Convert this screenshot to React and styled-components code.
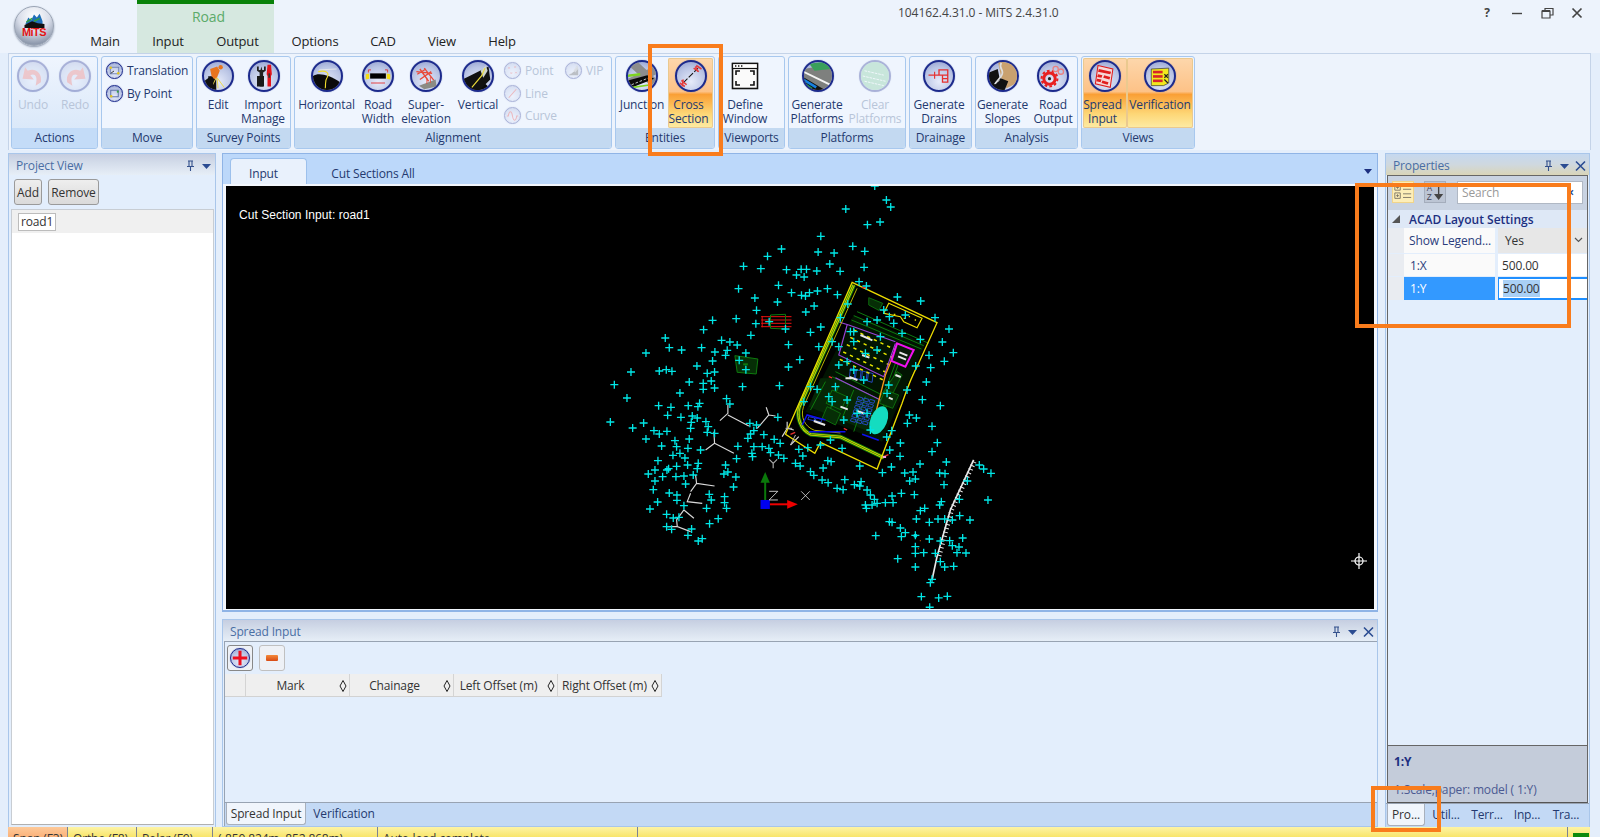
import React from 'react';
import styled, { createGlobalStyle } from 'styled-components';

const Global = createGlobalStyle`
  html, body { margin: 0; padding: 0; background: #e4eefb; overflow: hidden; }
  body { font-family: "Open Sans", "Noto Sans", "Liberation Sans", sans-serif; font-size: 12px; letter-spacing: -0.15px; color: #1f3468; }
  * { box-sizing: border-box; }
`;

const Page = styled.div`position: relative; width: 1600px; height: 837px; overflow: hidden; display: flex; flex-direction: column; background: #e4eefb;`;

/* ---------- title bar ---------- */
const TitleBar = styled.header`height: 53px; flex: none; display: flex; background: #edf3fc; padding-left: 14px;`;
const Logo = styled.div`width: 40px; height: 40px; margin-top: 6px; flex: none; border-radius: 50%; border: 1px solid #9aa4b4; background: radial-gradient(circle at 50% 25%, #ffffff 0%, #d9deea 45%, #8d98ac 80%, #c7cdd9 100%); box-shadow: 0 1px 2px #8893a8; overflow: hidden;
  svg { display: block; width: 100%; height: 100%; }`;
const Menu = styled.nav`display: flex; align-items: flex-end; margin-left: 26px; flex: none; height: 53px;`;
const MenuTab = styled.div`width: ${p => p.$w}px; height: 25px; font-size: 13px; color: #222; text-align: center; line-height: 26px; padding-left: ${p => p.$pl || 0}px; padding-right: ${p => p.$pr || 0}px;`;
const Context = styled.div`display: flex; flex-direction: column; height: 53px; background: #d6e8e0; border-top: 4px solid #098209;`;
const ContextLabel = styled.div`height: 24px; flex: none; text-align: center; font-size: 14px; color: #5cab6a; line-height: 26px; padding-left: 6px;`;
const ContextTabs = styled.div`display: flex;`;
const WindowTitle = styled.div`margin-left: 366px; margin-top: 4px; font-size: 12px; letter-spacing: -0.05px; color: #444; white-space: nowrap; width: 200px; flex: none;`;
const WinControls = styled.div`margin-left: auto; display: flex; align-items: flex-start; padding: 7px 15px 0 0; gap: 14px;
  svg { display: block; width: 16px; height: 12px; }`;
const HelpMark = styled.span`width: 16px; text-align: center; font-weight: 700; font-size: 12px; color: #444; line-height: 12px;`;

/* ---------- ribbon ---------- */
const Ribbon = styled.div`height: 97px; flex: none; margin-left: 8px; width: 1583px; border: 1px solid #c4d3e8; border-bottom: 0; background: #edf3fc; padding: 2px 0 0 2px; display: flex; gap: 3px;`;
const Group = styled.section`width: ${p => p.$w}px; height: 93px; flex: none; display: flex; flex-direction: column; border: 1px solid #a8c8ee; border-radius: 3px; overflow: hidden; background: ${p => p.$tinted ? 'linear-gradient(#eff5fe, #d5e5f8)' : '#eff5fe'};`;
const GroupBody = styled.div`height: 71px; display: flex; flex: none; padding-top: 1px; padding-left: ${p => p.$pl || 0}px;`;
const GroupLabel = styled.div`flex: 1; background: ${p => p.$tinted ? '#c4dcf8' : '#c3d9f1'}; text-align: center; line-height: 19px; color: #24396f;`;
const RibbonBtn = styled.div`width: ${p => p.$w}px; height: 70px; flex: none; display: flex; flex-direction: column; align-items: center; padding-top: 2px; border-radius: 2px;
  ${p => p.$active && 'background: linear-gradient(#fdd7ac 0%, #fdc287 48%, #fa9f35 52%, #fdd777 80%, #fdeca5 100%); box-shadow: inset 0 0 0 1px #eac98f;'}`;
const BtnLabel = styled.div`margin-top: 6px; margin-right: ${p => p.$nudge || 0}px; line-height: 14px; text-align: center; white-space: pre; color: ${p => p.$off ? '#b8c5d9' : '#24396f'};`;
const Badge = styled.div`width: ${p => p.$s}px; height: ${p => p.$s}px; flex: none; border-radius: 50%; overflow: hidden; border: ${p => p.$s > 20 ? 2 : 1.5}px solid #1c2a8c; background: radial-gradient(circle at 50% 70%, #e6ebfa 0%, #b9c4e4 60%, #8a97cb 100%); box-shadow: 0 0 1px #5566aa;
  ${p => p.$off && 'opacity: 0.33;'}
  svg { display: block; width: 100%; height: 100%; }`;
const PlainIcon = styled.div`width: 32px; height: 32px; flex: none; svg { display: block; width: 100%; height: 100%; }`;
const SmallCol = styled.div`width: ${p => p.$w}px; flex: none; display: flex; flex-direction: column; padding-top: 4px; margin-left: ${p => p.$ml || 0}px; gap: 5.5px;`;
const SmallBtn = styled.div`display: flex; align-items: center; gap: 4px; height: 17px; white-space: nowrap; color: ${p => p.$off ? '#b8c5d9' : '#24396f'};`;

/* ---------- main ---------- */
const Main = styled.main`flex: none; height: 674px; margin-top: 3px; padding-left: 8px; display: flex;`;
const DockPanel = styled.aside`width: ${p => p.$w}px; flex: none; display: flex; flex-direction: column; background: #e3eefc; border: 1px solid #a9c6ea; border-bottom: 0;`;
const DockHead = styled.div`height: 21px; flex: none; display: flex; align-items: center; padding: 2px 2px 0 7px; color: ${p => p.$c || '#4a6ea4'}; background: ${p => p.$tan ? 'linear-gradient(#c5d8ef, #cfd8df 50%, #d9d5b8)' : 'linear-gradient(#c6cee1, #d3dcea 40%, #e6eef7)'};
  span { flex: 1; }
  svg { display: block; width: 13px; height: 12px; margin-left: 3px; }`;
const LeftBar = styled.div`display: flex; gap: 6px; padding: 4px 0 0 5px; height: 34px; flex: none;`;
const Button = styled.button`font: inherit; letter-spacing: inherit; color: #333; width: ${p => p.$w}px; height: 26px; padding: 0; border: 1px solid #9a9a9a; border-radius: 3px; background: linear-gradient(#eeeeee, #dadada);`;
const ProjectList = styled.div`flex: 1; margin: 0 1px 2px 2px; background: #fff; border: 1px solid #c8cdd3; border-bottom-color: #b0b0b0;`;
const ProjectRow = styled.div`height: 23px; background: #f0f0f0; padding: 3px 6px 2px;`;
const RowInput = styled.div`width: 38px; height: 18px; background: #fff; border: 1px solid #bcbcbc; line-height: 16px; padding-left: 2px; color: #333;`;

const Center = styled.div`width: 1156px; flex: none; margin: 0 7px 0 6px; display: flex; flex-direction: column; gap: 7px;`;
const DocPanel = styled.div`height: 459px; flex: none; display: flex; flex-direction: column; background: #f3f7fd; border: 1px solid #8fb4e6; border-width: 1px 1px 2px 1px;`;
const DocTabs = styled.div`height: 30px; flex: none; display: flex; align-items: flex-end; background: #bcd8fa; padding-left: 7px;`;
const DocTab = styled.div`height: 26px; width: ${p => p.$w}px; line-height: 31px; text-align: center; color: #24396f; border-radius: 4px 4px 0 0; padding-right: ${p => p.$pr || 0}px;
  ${p => p.$active && 'background: #e9f1fc; border: 1px solid #9cc0ec; border-bottom: 0; line-height: 30px;'}`;
const DocMenu = styled.div`margin-left: auto; margin-right: 5px; margin-bottom: 10px; width: 0; height: 0; border: 4px solid transparent; border-top: 5px solid #1c2f80; border-bottom: 0;`;
const Canvas = styled.div`position: relative; flex: 1; margin: 2px 3px 1px 3px; background: #000; overflow: hidden;
  svg { position: absolute; inset: 0; width: 100%; height: 100%; display: block; }`;
const CanvasTitle = styled.div`position: absolute; left: 13px; top: 22px; color: #fff; font-size: 12px; font-family: "Liberation Sans", sans-serif; letter-spacing: 0.05px;`;
const CrossCursor = styled.div`position: absolute; left: 1125px; top: 367px; width: 16px; height: 16px; border-radius: 50%;
  svg { width: 16px; height: 16px; }`;

const SpreadPanel = styled.div`flex: 1; display: flex; flex-direction: column; background: #e3eefc; border: 1px solid #a9c6ea;`;
const SpreadBody = styled.div`flex: 1; display: flex; flex-direction: column; margin-left: 1px; border-top: 1px solid #98a3b2; border-left: 1px solid #98a3b2;`;
const SpreadTools = styled.div`display: flex; gap: 6px; padding: 3px 0 0 2px; height: 31px; flex: none;`;
const ToolBtn = styled.div`width: 26px; height: 26px; border: 1px solid ${p => p.$strong ? '#888' : '#c0c0c0'}; border-radius: 3px; background: #eef1f6; display: flex; align-items: center; justify-content: center;`;
const MinusBar = styled.div`width: 12px; height: 6px; background: linear-gradient(#f48a3a, #d84a14); border-radius: 1px;`;
const TableHead = styled.div`display: flex; height: 23px; flex: none; margin-top: 1px; width: 437px; background: #efefef; border-bottom: 1px solid #d2d2d2;`;
const HeadCell = styled.div`width: ${p => p.$w}px; flex: none; display: flex; align-items: center; justify-content: center; position: relative; border-right: 1px solid #d4d4d4; color: #333; padding-right: ${p => p.$pr ?? 14}px; white-space: nowrap;`;
const SortMark = styled.svg`position: absolute; right: 2px; top: 5px; width: 8px; height: 14px;`;
const Fill = styled.div`flex: 1;`;
const BottomTabs = styled.div`height: 24px; flex: none; display: flex; background: #c3d9f5; border-top: 1px solid #98a3b2; padding-left: 1px;`;
const BottomTab = styled.div`width: ${p => p.$w}px; height: 22px; line-height: 22px; text-align: center; color: #24396f; white-space: nowrap; flex: none;
  ${p => p.$active && 'background: #f0f5fc; border: 1px solid #a8b0bc; border-top: 0; border-radius: 0 0 3px 3px; color: #333; line-height: 21px;'}`;

const PropsBox = styled.div`flex: 1; margin: 0 1px; display: flex; flex-direction: column; border: 1px solid #666; border-bottom: 1px solid #555; min-height: 0;`;
const PropsTools = styled.div`height: 34px; flex: none; background: #c9d3e2; display: flex; align-items: flex-start; padding: 5px 4px 0 4px;`;
const ToolIcon = styled.div`width: 22px; height: 22px; margin-right: ${p => p.$mr}px; flex: none; background: ${p => p.$on ? '#fdeeb8' : '#bcc5d4'}; border: 1px solid ${p => p.$on ? '#f0d48a' : '#a4adbc'};
  svg { display: block; width: 100%; height: 100%; }`;
const SearchBox = styled.div`width: 127px; height: 23px; background: #fff; border: 1px solid #b0b8c4; color: #999; line-height: 21px; padding-left: 4px; display: flex;
  span { flex: 1; } b { color: #2b4c92; font-weight: 700; padding-right: 8px; }`;
const Cat = styled.div`height: 18px; flex: none; background: #dee8f6; display: flex; align-items: center; font-weight: 600; color: #1c2f80; letter-spacing: 0;`;
const CatArrow = styled.div`width: 0; height: 0; margin: 0 9px 0 4px; border-style: solid; border-width: 0 0 8px 8px; border-color: transparent transparent #555 transparent;`;
const GridRow = styled.div`height: ${p => p.$h}px; flex: none; display: flex; margin-top: ${p => p.$mt || 0}px;`;
const Gutter = styled.div`width: 16px; flex: none; background: #e9ecf1;`;
const NameCell = styled.div`width: 91px; flex: none; margin-right: 3px; padding-left: ${p => p.$pad || 6}px; display: flex; align-items: center; white-space: nowrap; overflow: hidden; background: ${p => p.$sel ? '#3399ff' : '#fafafa'}; color: ${p => p.$sel ? '#fff' : '#2b3d7c'};`;
const ValueCell = styled.div`flex: 1; display: flex; align-items: center; padding-left: ${p => p.$pad || 4}px; color: #333; position: relative; white-space: nowrap;
  background: ${p => p.$combo ? '#e7e7e7' : '#fff'};
  ${p => p.$sel && 'border-top: 2px solid #1f8fff; border-bottom: 2px solid #1f8fff; border-left: 1px solid #1f8fff;'}
  mark { background: #a9d0f5; color: #333; }`;
const Chevron = styled.svg`position: absolute; right: 4px; top: 9px; width: 9px; height: 6px;`;
const DescBox = styled.div`height: 57px; flex: none; margin-top: 3px; background: #c4ccda; border-top: 1px solid #666; padding: 7px 6px; color: #4b5a92;`;
const DescTitle = styled.div`font-weight: 700; color: #1c2f80; height: 21px; margin-bottom: 7px;`;

/* ---------- status ---------- */
const StatusBar = styled.footer`position: relative; flex: none; height: 10px; margin-left: 8px; width: 1582px; overflow: hidden; display: flex; background: linear-gradient(#fdf4a6, #f8e56a);`;
const StatusCell = styled.div`width: ${p => p.$w}px; flex: none; padding: 3px 0 0 5px; border-right: 1px solid #7d8391; white-space: nowrap; color: #333; ${p => p.$on && 'background: linear-gradient(#fdc999, #fbb27a);'}`;
const StatusEnd = styled.div`margin-left: auto; width: 23px; padding: 0 0 0 5px; border-left: 1px solid #7d8391; display: flex; align-items: flex-end;`;
const StatusLight = styled.div`width: 16px; height: 4px; background: #0d8a0d;`;

/* ---------- annotation frames ---------- */
const Frame = styled.div`position: absolute; left: ${p => p.$x}px; top: ${p => p.$y}px; width: ${p => p.$w}px; height: ${p => p.$h}px; border: 4px solid #f97c1c; pointer-events: none;`;

/* ---------- icon art ---------- */
const I = ({ children }) => <svg viewBox="0 0 32 32">{children}</svg>;
const art = {
  undo: <I><path d="M25 23C27 12 18 6 10 10L7 6 4 19 17 20 13 15C18 13 22 16 19 27Z" fill="#f0706a" /></I>,
  redo: <I><path d="M7 23C5 12 14 6 22 10L25 6 28 19 15 20 19 15C14 13 10 16 13 27Z" fill="#f0706a" /></I>,
  trans: <I><rect x="7" y="9" width="18" height="14" fill="none" stroke="#6d7fb0" strokeWidth="2" /><circle cx="8" cy="10" r="2.6" fill="#e2c520" /><circle cx="24" cy="22" r="2.6" fill="#e2c520" /><path d="M8 22l7-5" stroke="#333" strokeWidth="2" /></I>,
  bypoint: <I><rect x="8" y="9" width="16" height="14" fill="none" stroke="#5a6da5" strokeWidth="2" /><circle cx="9" cy="22" r="2.6" fill="#e2c520" /><circle cx="23" cy="12" r="2.2" fill="#3aa34a" /></I>,
  edit: <I><path d="M0 32L0 22 8 16 14 20 14 32Z" fill="#111" /><path d="M7 8l8-3 3 5-4 10-5-2Z" fill="#e8741e" /><circle cx="19" cy="6" r="2.5" fill="#e8741e" /><path d="M14 18L8 30M15 18l1 12M15 18l8 11" stroke="#ecd84a" strokeWidth="1.1" fill="none" /><path d="M5 16l5 1 1 13-7-1Z" fill="#111" /></I>,
  tools: <I><path d="M8 5v5l3 2v16h4V12l3-2V5l-2 0v4h-2l-1-4-1 4H10V5Z" fill="#222" /><rect x="8" y="16" width="8" height="12" fill="#191919" /><path d="M20 3h4l1 11-1 2v12h-4V16l-1-2Z" fill="#e3141c" /><rect x="21" y="13" width="2" height="5" fill="#333" /></I>,
  horizontal: <I><path d="M0 32V16C6 12 18 14 32 24V32Z" fill="#0a0a0a" /><path d="M7 9l20-1" stroke="#e8e8e8" strokeWidth="1" /><path d="M6 11C16 9 19 13 16 18 13 22 15 25 14 30" fill="none" stroke="#f0dc2c" strokeWidth="1.3" /></I>,
  roadwidth: <I><rect x="7" y="13" width="18" height="6" fill="#000" /><path d="M2 14l4-1v6l-4 1ZM30 14l-4-1v6l4 1Z" fill="#f4dc14" /><path d="M5 9h3M27 9h-3M5 9v3M27 9v3M8 24h16" stroke="#e42c2c" strokeWidth="1" fill="none" /></I>,
  super: <I><path d="M6 14l10-6M9 20L22 11M9 8l10 14M14 7l11 14M5 11l18 2" stroke="#e9493a" strokeWidth="1.5" fill="none" /><path d="M8 27l19-7 1 8-14 3Z" fill="#8b8b84" /><path d="M17 18v7M21 17v7" stroke="#e9493a" strokeWidth="1" /></I>,
  vertical: <I><path d="M0 19H18L32 32H0Z" fill="#0a0a0a" /><path d="M0 19L20 9 28 5 30 20 18 32H0Z" fill="#111" /><path d="M19 10l6-6 2 6-5 8Z" fill="#cfd4ce" /><path d="M9 29L20 16 24 7" stroke="#e8d83a" strokeWidth="1.4" fill="none" /></I>,
  point: <I><path d="M7 9l3 3m0-3l-3 3M20 7l3 3m0-3l-3 3M12 20l3 3m0-3l-3 3M22 19l3 3m0-3l-3 3" stroke="#e53c3c" strokeWidth="1.5" /></I>,
  line: <I><path d="M8 25L24 7" stroke="#e53c3c" strokeWidth="2.2" /></I>,
  curve: <I><path d="M4 17h3c2-12 7-12 9 0s7 12 9 0h3" fill="none" stroke="#e53c3c" strokeWidth="2.2" /></I>,
  vip: <I><path d="M5 26L26 12V26Z" fill="#555" /><path d="M16 16l8-11 2 7-6 8Z" fill="#aaa" /><path d="M10 24l13-15" stroke="#ddd" strokeWidth="1" /></I>,
  junction: <I><path d="M-2 20L32 4V14L0 32Z" fill="#8d8d8d" /><path d="M6 2L30 24" stroke="#8d8d8d" strokeWidth="10" /><path d="M0 21L22 15 30 19 2 30Z" fill="#0a0a0a" /><path d="M-2 16L14 14" stroke="#7ed321" strokeWidth="3" /><path d="M4 26l20-8" stroke="#ddd" strokeWidth="1" strokeDasharray="3 2" /><path d="M0 30L26 26" stroke="#7ed321" strokeWidth="2" /></I>,
  cross: <I><path d="M7 24L24 7" stroke="#111" strokeWidth="1.2" strokeDasharray="7 2" /><path d="M19 7l6 4M22 4l6 4M21 5l3 6" stroke="#e53c3c" strokeWidth="1.8" /><path d="M5 21l6 5M3 24l6 4M7 20l-1 8" stroke="#e53c3c" strokeWidth="1.8" /></I>,
  window: <svg viewBox="0 0 32 32"><rect x="3.5" y="3.5" width="25" height="25" fill="#fafafa" stroke="#111" strokeWidth="1.6" /><rect x="3.5" y="3.5" width="25" height="5" fill="#fff" stroke="#111" strokeWidth="1.2" /><path d="M6 6h1.4M9 6h1.4M12 6h1.4" stroke="#111" strokeWidth="1.5" /><path d="M7 15v-4h4M25 15v-4h-4M7 21v4h4M25 21v4h-4" fill="none" stroke="#111" strokeWidth="1.6" /></svg>,
  platforms: <I><path d="M0 8L32 2V32H0Z" fill="#7e807e" /><path d="M6 2L28 -1 30 8 12 10Z" fill="#3aa05a" /><path d="M-1 11L32 27" stroke="#f4f4f4" strokeWidth="2.2" /><path d="M-1 17L24 32H0Z" fill="#111" /><path d="M-1 20L14 29" stroke="#1680e0" strokeWidth="3" /><path d="M-1 24L9 31" stroke="#1aa060" strokeWidth="3" /></I>,
  clearp: <I><path d="M0 0H32V32H0Z" fill="#79c896" /><path d="M4 10l22 5M2 16l26 6M4 22l22 5" stroke="#fff" strokeWidth="1" strokeDasharray="3 1" /></I>,
  drains: <I><path d="M4 15H26M16 15v-6h10v14h-6v-8" fill="none" stroke="#e53030" strokeWidth="1.5" /><path d="M11 11v8M20 19h6" stroke="#e53030" strokeWidth="1.3" /></I>,
  slopes: <I><path d="M10 -2L32 4V24L20 30 14 18Z" fill="#c9a16f" /><path d="M0 12L10 8 12 18 22 22 18 32H0Z" fill="#111" /><path d="M14 1C10 8 19 9 14 16 11 20 9 22 7 25" fill="none" stroke="#ddd" strokeWidth="2" /><path d="M6 25l6-4" stroke="#ddd" strokeWidth="1" /></I>,
  output: <I><circle cx="12" cy="19" r="6.5" fill="none" stroke="#e82020" strokeWidth="3.4" /><circle cx="12" cy="19" r="9" fill="none" stroke="#e82020" strokeWidth="2.4" strokeDasharray="3 2.6" /><circle cx="12" cy="19" r="1.8" fill="#222" /><circle cx="19" cy="8" r="3" fill="none" stroke="#e98080" strokeWidth="1.5" /><circle cx="25" cy="11" r="3" fill="none" stroke="#e98080" strokeWidth="1.5" /></I>,
  spread: <I><path d="M8 4l17 4-3 21-17-4Z" fill="#f5d8d8" stroke="#e01e1e" strokeWidth="1.2" /><path d="M9 8l14 3-1 3-14-3ZM8 14l5 1-1 3-5-1ZM15 15l7 2-1 3-7-2ZM7 19l5 1-1 3-5-1ZM13 21l7 2-1 3-7-2Z" fill="#e01e1e" /></I>,
  verify: <I><path d="M6 8l20-1v17l-6 3H6Z" fill="#f2e81e" stroke="#333" strokeWidth="0.8" /><rect x="8" y="10" width="11" height="3" fill="#d8242a" /><rect x="8" y="15" width="11" height="3" fill="#d8242a" /><rect x="8" y="20" width="11" height="3" fill="#d8242a" /><path d="M21 14l4 4m0-4l-4 4M21 20l4 4" stroke="#222" strokeWidth="1.3" /></I>,
};

const Ico = ({ name, off, s = 32 }) => <Badge $s={s} $off={off}>{art[name]}</Badge>;
const Big = ({ w, icon, text, off, active, nudge }) => (
  <RibbonBtn $w={w} $active={active}>
    <Ico name={icon} off={off} />
    <BtnLabel $off={off} $nudge={nudge}>{text}</BtnLabel>
  </RibbonBtn>
);
const Small = ({ icon, text, off }) => (
  <SmallBtn $off={off}><Ico name={icon} off={off} s={17} />{text}</SmallBtn>
);

/* ---------- drawing data ---------- */
const crosses = [853,18,888,60,901,81,766,87,869,126,831,134,691,169,787,199,823,214,573,207,683,216,731,219,531,229,718,252,459,259,511,266,588,269,632,268,648,268,679,273,749,274,821,262,618,285,641,291,806,305,564,316,444,326,828,318,603,338,633,346,645,348,657,338,681,333,711,326,741,344,493,354,561,366,671,378,772,372,498,391,646,396,921,351,991,363,437,416,366,421,496,431,536,425,585,447,691,441,339,449,660,457,481,466,224,474,393,481,418,486,440,495,594,494,236,503,273,510,333,503,166,519,373,516,410,511,405,526,466,519,446,541,628,539,366,543,319,558,594,561,466,569,121,576,206,573,227,569,244,574,350,580,372,576,296,606,362,603,338,610,338,628,372,624,71,614,456,620,567,617,268,639,109,654,408,656,418,672,204,677,241,682,293,677,327,670,322,680,231,706,271,712,305,708,320,714,302,727,300,745,346,725,59,726,159,729,126,744,190,752,206,762,229,754,353,740,350,757,372,760,166,777,253,782,296,777,213,798,258,800,292,805,330,810,442,799,478,730,498,735,490,752,480,762,472,775,520,764,551,778,569,790,562,712,490,800,515,800,535,805,540,818,484,820,486,830,438,836,564,825,580,835,637,828,625,808,652,803,247,826,268,820,283,834,202,842,258,859,291,855,323,850,320,866,193,870,173,882,234,866,229,870,405,855,412,876,400,882,436,891,256,890,280,888,216,890,193,903,308,885,285,912,429,921,188,929,236,939,259,945,259,961,356,943,362,960,402,950,402,968,408,985,201,966,178,987,280,977,348,985,228,1003,248,1014,265,1012,383,1016,357,1031,228,1040,243,1048,303,1047,292,1066,335,1076,323,1083,615,850,629,858,660,875,670,886,698,864,712,842,722,845,808,858,695,900,713,908,763,899,740,925,758,929,792,914,812,905,808,918,830,930,840,945,852,958,845,975,825,975,828,985,860,970,885,968,905,948,908,968,933,940,972,944,876,878,903,861,943,879,968,876,958,903,975,897,989,852,1068,846,1048,879,1064,881,1061,914,1131,903,1167,855,1180,867,1202,880,1193,960,1107,958,1053,965,1048,975,990,992,1003,985,978,1017,1017,1027,1043,1017,1063,1017,1086,1020,1108,1007,1139,1020,897,1025,905,1027,930,1044,945,1058,933,1070,856,1067,975,1066,1017,1077,1050,1083,1078,1082,1086,1097,1117,1074,1106,1101,1100,1118,1127,1119,975,1100,975,1120,1000,1118,1035,1120,922,1136,975,1161,1050,1145,1063,1161,1090,1159,1025,1198,1020,1208,993,1250,1045,1254,1071,1249,1018,1282,1034,413,1076,447,1056,486,1089,518,1062,544,1016,526,1021,563,1008,606,996,659,1050,677,957,705,978,714,951,730,1025,739,1041,788,1025,815,930,789,929,829,904,752,889,771,898,810,976,558,950,630,880,390,897,410,910,430,945,405,935,460,990,478,860,420,830,425,790,455,780,455,750,413,725,485,685,500,745,500,790,485,825,520,870,470,860,510,745,555,770,545,895,615,820,600,790,570,735,620,680,628,660,620,640,665,715,650,770,660,725,665,760,720,830,700,890,640,720,780,755,805,690,795,800,700,840,750];
let crossPath = '';
for (let i = 0; i < crosses.length; i += 2) {
  const x = crosses[i], y = crosses[i + 1];
  crossPath += `M${x - 12} ${y}h24M${x} ${y - 12}v24`;
}

/* rows of parking dashes and building blocks run along the site's long axis */
const dashRows = [];
for (let r = 0; r < 5; r++) {
  for (let c = 0; c < 7; c++) {
    const x = 205 - 10.5 * r + 20 * c;
    const y = 165 + 22 * r + 9.5 * c;
    dashRows.push(`M${x} ${y}l9 4.300`);
  }
}
const blockAt = (x0, y0, rows, cols, w, h) => {
  const out = [];
  for (let r = 0; r < rows; r++) {
    for (let c = 0; c < cols; c++) {
      const x = x0 - 4 * r + (w + 4) * c;
      const y = y0 + (h + 5) * r + 4 * c;
      out.push(`M${x} ${y}l${w} 4l-3 ${h}l-${w} -4Z`);
    }
  }
  return out.join('');
};
const blueBlocks = blockAt(218, 365, 6, 3, 14, 8) + blockAt(195, 280, 1, 4, 14, 26) + blockAt(70, 425, 1, 2, 18, 8);

const Drawing = () => (
  <svg viewBox="225 186 1149 423" preserveAspectRatio="none">
    <g transform="translate(590 180) scale(0.3333)">
      <g fill="none" stroke="#d8d8d8" strokeWidth="3.5">
        <path d="M412 675V700L388 722M412 705L475 738M527 682L535 705 500 745M535 705L555 708" />
        <path d="M370 755L372 790 345 810M372 790L430 820" />
        <path d="M315 885L318 910 300 935M318 910L372 918M300 940L290 965 335 970M280 990L310 1015M280 990L258 1020 260 1040 300 1055M230 1040L260 1040" />
        <path d="M575 770L590 745 610 750M590 725L590 745M600 795L625 770" />
        <path d="M548 865V850L536 838M548 850L560 838" stroke="#aaa" />
      </g>
      <path d="M512 410H603M512 420H603M512 430H603M512 440H603M515 408V442" stroke="#e81010" strokeWidth="3" fill="none" />
      <path d="M540 405L585 403 585 447 540 445Z" fill="none" stroke="#0e7a0e" strokeWidth="3" />
      <path d="M433 527L502 537 497 582 440 577Z" fill="#062e06" stroke="#0e7a0e" strokeWidth="3" />
      <rect x="458" y="550" width="14" height="6" fill="#0e7a0e" />
      <path d="M1150 840L1080 990 1040 1130 1025 1200" fill="none" stroke="#e8e8e8" strokeWidth="5" />
      <path d="M1152 845L1084 990 1046 1130" fill="none" stroke="#e8e8e8" strokeWidth="14" strokeDasharray="3 9" />
      <circle cx="975" cy="1067" r="6" fill="#00e0e0" />
      <circle cx="990" cy="1082" r="2" fill="#b05010" /><circle cx="984" cy="1106" r="2" fill="#b05010" />
    </g>
    {/* site plan */}
    <g transform="translate(785 275) scale(0.3333)">
      <path d="M250 68L292 85 280 106 250 90Z" fill="#062e06" stroke="#0e7a0e" strokeWidth="2.5" />
      <path d="M205 120L420 205 290 500 60 410Z" fill="#021402" />
      <path d="M150 310L285 375 250 470 70 395 105 310Z" fill="#062706" />
      <path d="M215 110L430 205M205 122L415 212M198 135L408 222M150 290L290 360M140 305L280 372M120 320L75 405M300 345L330 265M240 365L205 470M160 330L130 415M205 345L170 430M345 250L270 460" fill="none" stroke="#0e7a0e" strokeWidth="3" />
      <path d="M280 370L335 290 350 300 300 400Z" fill="#062e06" stroke="#0e7a0e" strokeWidth="2.5" />
      <path d="M125 395l40 20-15 35-40-20ZM140 345l45 20-18 40-45-20ZM300 345l40 15-18 40-40-15Z" fill="#062e06" stroke="#0e7a0e" strokeWidth="2.5" />
      <path d={blueBlocks} fill="none" stroke="#2a50e0" strokeWidth="2.5" />
      <path d={dashRows.join('')} stroke="#e8e800" strokeWidth="4.500" fill="none" />
      <path d="M150 138L190 150 330 200M185 150L160 240 295 305 330 205M150 308L285 375" fill="none" stroke="#9a44d8" strokeWidth="3.400" />
      <path d="M205 30L42 395C32 425 45 465 75 478L165 486 295 548" fill="none" stroke="#0e7a0e" strokeWidth="13" />
      <path d="M205 30L42 395C32 425 45 465 75 478L165 486 295 548" fill="none" stroke="#e0e000" strokeWidth="7" />
      <path d="M205 30L42 395C32 425 45 465 75 478L165 486 295 548" fill="none" stroke="#0a5a0a" strokeWidth="2" />
      <path d="M215 40L54 395C44 425 57 455 87 466L165 474" fill="none" stroke="#d8d800" strokeWidth="2.500" />
      <path d="M200 22L455 143 400 265Q375 310 350 385L275 582 105 502 88 535 0 478Z" fill="none" stroke="#ecdc00" strokeWidth="4" />
      <path d="M310 85L410 130 395 158 355 140 345 125 295 115Z" fill="none" stroke="#ecdc00" strokeWidth="3.500" />
      <path d="M325 118h5M355 130h5M370 125h4M388 135h4" stroke="#e6e000" strokeWidth="4" />
      <path d="M120 435L65 420 50 450M70 470H180M230 478L280 496" fill="none" stroke="#0e10f0" strokeWidth="4.500" />
      <path d="M85 438l34 12M180 310h18M225 180l36 16M230 240l22 8M192 306l24 9M165 395l22 8M215 408l22 8M310 368l12 5M340 235l20 8M330 300l16 6" stroke="#e8e8e8" strokeWidth="6" />
      <path d="M328 230L300 300 268 425 258 422M268 425L292 432" fill="none" stroke="#f59a18" strokeWidth="4" />
      <ellipse cx="280" cy="436" rx="25" ry="44" transform="rotate(22 280 436)" fill="#14dcc0" />
      <path d="M335 205L385 225 360 275 318 258Z" fill="#0a1a0a" stroke="#f010f0" strokeWidth="6" />
      <path d="M342 232l24 10M338 244l24 10" stroke="#e8e8e8" strokeWidth="6" />
      <path d="M230 38h14M295 545l14 -6M15 478l14 -6M130 305l10 4M175 460l10 5" stroke="#e83030" strokeWidth="4" />
      <path d="M292 546h10" stroke="#f0a0e0" strokeWidth="6" />
      <path d="M0 460h20M15 510L30 480" stroke="#bbb" strokeWidth="3" />
    </g>
    <g transform="translate(590 180) scale(0.3333)">
      <path d={crossPath} stroke="#00e6e6" strokeWidth="4" fill="none" />
      <path d="M524 962V905" stroke="#0a780a" strokeWidth="6" />
      <path d="M510 908L524 876 538 908Z" fill="#0a780a" />
      <path d="M538 973H595" stroke="#ee0000" strokeWidth="6" />
      <path d="M590 960L622 973 590 986Z" fill="#ee0000" />
      <rect x="510" y="960" width="28" height="27" fill="#0000f0" />
      <path d="M536 934H562L536 960H562" fill="none" stroke="#e8e8e8" strokeWidth="2.5" />
      <path d="M632 934L658 960M658 934L632 960" stroke="#d8d8d8" strokeWidth="2.5" />
    </g>
  </svg>
);

const PinIcon = () => <svg viewBox="0 0 13 12"><path d="M4 1h5M5 1v5M8 1v5M3 6.5h7M6.5 7v4" stroke="#33508c" strokeWidth="1.1" fill="none" /></svg>;
const DropIcon = () => <svg viewBox="0 0 13 12"><path d="M2 4h9L6.5 9Z" fill="#2b4c92" /></svg>;
const CloseIcon = () => <svg viewBox="0 0 13 12"><path d="M2 1.5l9 9M11 1.5l-9 9" stroke="#2b4c92" strokeWidth="1.6" /></svg>;
const Sort = () => <SortMark viewBox="0 0 8 14"><path d="M4 1.5L7 7 4 12.5 1 7Z" fill="none" stroke="#222" strokeWidth="1" /></SortMark>;

export default function App() {
  return (
    <Page>
      <Global />
      <TitleBar>
        <Logo>
          <svg viewBox="0 0 40 40">
            <path d="M11 18l3-7 3 3 3-6 3 3 3-4 3 8 0 3H11Z" fill="#1f6fb8" />
            <path d="M10 19l8-4 6 2 7 1v4H10Z" fill="#111" />
            <path d="M12 16l6-4M20 15l6-3" stroke="#35a040" strokeWidth="1.5" />
            <text x="20" y="31" textAnchor="middle" fontSize="11.500" fontWeight="700" fill="#e31414" fontFamily="Liberation Sans, sans-serif" letterSpacing="-0.6">MiTS</text>
          </svg>
        </Logo>
        <Menu>
          <MenuTab $w={57} $pr={7}>Main</MenuTab>
          <Context>
            <ContextLabel>Road</ContextLabel>
            <ContextTabs>
              <MenuTab $w={66} $pr={4}>Input</MenuTab>
              <MenuTab $w={71} $pr={2}>Output</MenuTab>
            </ContextTabs>
          </Context>
          <MenuTab $w={76} $pl={6}>Options</MenuTab>
          <MenuTab $w={62} $pl={4}>CAD</MenuTab>
          <MenuTab $w={58} $pl={2}>View</MenuTab>
          <MenuTab $w={62} $pl={2}>Help</MenuTab>
        </Menu>
        <WindowTitle>104162.4.31.0 - MiTS 2.4.31.0</WindowTitle>
        <WinControls>
          <HelpMark>?</HelpMark>
          <svg viewBox="0 0 16 12"><path d="M3 6.5h10" stroke="#444" strokeWidth="1.4" /></svg>
          <svg viewBox="0 0 16 12"><path d="M3 4h8v7H3ZM6 4V1.500h8V8h-3" fill="none" stroke="#444" strokeWidth="1.2" /><path d="M3 4h8" stroke="#444" strokeWidth="2" /></svg>
          <svg viewBox="0 0 16 12"><path d="M3.500 1.500l9 9M12.500 1.500l-9 9" stroke="#444" strokeWidth="1.7" /></svg>
        </WinControls>
      </TitleBar>

      <Ribbon>
        <Group $w={87} $tinted>
          <GroupBody>
            <Big w={42} icon="undo" text="Undo" off />
            <Big w={42} icon="redo" text="Redo" off />
          </GroupBody>
          <GroupLabel $tinted>Actions</GroupLabel>
        </Group>
        <Group $w={92}>
          <GroupBody $pl={4}>
            <SmallCol $w={86}>
              <Small icon="trans" text="Translation" />
              <Small icon="bypoint" text="By Point" />
            </SmallCol>
          </GroupBody>
          <GroupLabel>Move</GroupLabel>
        </Group>
        <Group $w={95}>
          <GroupBody>
            <Big w={42} icon="edit" text="Edit" />
            <Big w={50} icon="tools" text={'Import\nManage'} nudge={2} />
          </GroupBody>
          <GroupLabel>Survey Points</GroupLabel>
        </Group>
        <Group $w={318}>
          <GroupBody>
            <Big w={63} icon="horizontal" text="Horizontal" />
            <Big w={40} icon="roadwidth" text={'Road\nWidth'} />
            <Big w={56} icon="super" text={'Super-\nelevation'} />
            <Big w={48} icon="vertical" text="Vertical" />
            <SmallCol $w={61} $ml={2}>
              <Small icon="point" text="Point" off />
              <Small icon="line" text="Line" off />
              <Small icon="curve" text="Curve" off />
            </SmallCol>
            <SmallCol $w={46}>
              <Small icon="vip" text="VIP" off />
            </SmallCol>
          </GroupBody>
          <GroupLabel>Alignment</GroupLabel>
        </Group>
        <Group $w={100}>
          <GroupBody>
            <Big w={52} icon="junction" text="Junction" />
            <Big w={45} icon="cross" text={'Cross\nSection'} active nudge={4} />
          </GroupBody>
          <GroupLabel>Entities</GroupLabel>
        </Group>
        <Group $w={67}>
          <GroupBody>
            <RibbonBtn $w={52}>
              <PlainIcon>{art.window}</PlainIcon>
              <BtnLabel>{'Define\nWindow'}</BtnLabel>
            </RibbonBtn>
          </GroupBody>
          <GroupLabel>Viewports</GroupLabel>
        </Group>
        <Group $w={118}>
          <GroupBody>
            <Big w={58} icon="platforms" text={'Generate\nPlatforms'} nudge={2} />
            <Big w={56} icon="clearp" text={'Clear\nPlatforms'} off />
          </GroupBody>
          <GroupLabel>Platforms</GroupLabel>
        </Group>
        <Group $w={63}>
          <GroupBody>
            <Big w={58} icon="drains" text={'Generate\nDrains'} />
          </GroupBody>
          <GroupLabel>Drainage</GroupLabel>
        </Group>
        <Group $w={103}>
          <GroupBody>
            <Big w={53} icon="slopes" text={'Generate\nSlopes'} />
            <Big w={48} icon="output" text={'Road\nOutput'} />
          </GroupBody>
          <GroupLabel>Analysis</GroupLabel>
        </Group>
        <Group $w={114}>
          <GroupBody $pl={1}>
            <Big w={44} icon="spread" text={'Spread\nInput'} active nudge={5} />
            <Big w={66} icon="verify" text="Verification" active />
          </GroupBody>
          <GroupLabel>Views</GroupLabel>
        </Group>
      </Ribbon>

      <Main>
        <DockPanel $w={208}>
          <DockHead>
            <span>Project View</span>
            <PinIcon /><DropIcon />
          </DockHead>
          <LeftBar>
            <Button $w={28}>Add</Button>
            <Button $w={51}>Remove</Button>
          </LeftBar>
          <ProjectList>
            <ProjectRow><RowInput>road1</RowInput></ProjectRow>
          </ProjectList>
        </DockPanel>

        <Center>
          <DocPanel>
            <DocTabs>
              <DocTab $w={77} $active $pr={10}>Input</DocTab>
              <DocTab $w={136} $pr={4}>Cut Sections All</DocTab>
              <DocMenu />
            </DocTabs>
            <Canvas>
              <Drawing />
              <CanvasTitle>Cut Section Input: road1</CanvasTitle>
              <CrossCursor>
                <svg viewBox="0 0 16 16"><circle cx="8" cy="8" r="4" fill="none" stroke="#fff" strokeWidth="1.200" /><path d="M8 0v16M0 8h16" stroke="#fff" strokeWidth="1.200" /></svg>
              </CrossCursor>
            </Canvas>
          </DocPanel>
          <SpreadPanel>
            <DockHead>
              <span>Spread Input</span>
              <PinIcon /><DropIcon /><CloseIcon />
            </DockHead>
            <SpreadBody>
              <SpreadTools>
                <ToolBtn $strong>
                  <Badge $s={20}>
                    <svg viewBox="0 0 20 20"><path d="M10 2v16M2 10h16" stroke="#ee1020" strokeWidth="3.4" /></svg>
                  </Badge>
                </ToolBtn>
                <ToolBtn><MinusBar /></ToolBtn>
              </SpreadTools>
              <TableHead>
                <HeadCell $w={21} />
                <HeadCell $w={104}>Mark<Sort /></HeadCell>
                <HeadCell $w={104}>Chainage<Sort /></HeadCell>
                <HeadCell $w={104}>Left Offset (m)<Sort /></HeadCell>
                <HeadCell $w={104} $pr={10}>Right Offset (m)<Sort /></HeadCell>
              </TableHead>
              <Fill />
              <BottomTabs>
                <BottomTab $w={80} $active>Spread Input</BottomTab>
                <BottomTab $w={76}>Verification</BottomTab>
              </BottomTabs>
            </SpreadBody>
          </SpreadPanel>
        </Center>

        <DockPanel $w={205}>
          <DockHead $tan>
            <span>Properties</span>
            <PinIcon /><DropIcon /><CloseIcon />
          </DockHead>
          <PropsBox>
            <PropsTools>
              <ToolIcon $on $mr={10}>
                <svg viewBox="0 0 22 22"><path d="M2 3h6v6H2ZM2 12h6v6H2ZM3.500 6h3M5 4.500v3M3.500 15h3M5 13.500v3M11 4h9M11 8h9M11 13h9M11 17h9" fill="none" stroke="#7a7466" strokeWidth="1" /></svg>
              </ToolIcon>
              <ToolIcon $mr={11}>
                <svg viewBox="0 0 22 22"><text x="2" y="10" fontSize="9" fontFamily="Liberation Sans, sans-serif" fill="#445">A</text><text x="2" y="20" fontSize="9" fontFamily="Liberation Sans, sans-serif" fill="#445">Z</text><path d="M15 3v15M11.500 14l3.500 4.500 3.500-4.500Z" stroke="#444" strokeWidth="1.500" fill="#444" /></svg>
              </ToolIcon>
              <SearchBox><span>Search</span><b>×</b></SearchBox>
            </PropsTools>
            <Cat><CatArrow />ACAD Layout Settings</Cat>
            <GridRow $h={25}>
              <Gutter />
              <NameCell $pad={5}>Show Legend...</NameCell>
              <ValueCell $combo $pad={7}>Yes
                <Chevron viewBox="0 0 9 6"><path d="M1 1l3.500 3.500L8 1" fill="none" stroke="#555" strokeWidth="1.200" /></Chevron>
              </ValueCell>
            </GridRow>
            <GridRow $h={22} $mt={1}>
              <Gutter />
              <NameCell>1:X</NameCell>
              <ValueCell>500.00</ValueCell>
            </GridRow>
            <GridRow $h={23} $mt={1}>
              <Gutter />
              <NameCell $sel>1:Y</NameCell>
              <ValueCell $sel><mark>500.00</mark></ValueCell>
            </GridRow>
            <Fill />
            <DescBox>
              <DescTitle>1:Y</DescTitle>
              <div>1:Scale,paper: model ( 1:Y)</div>
            </DescBox>
          </PropsBox>
          <BottomTabs>
            <BottomTab $w={38} $active>Pro...</BottomTab>
            <BottomTab $w={42}>Util...</BottomTab>
            <BottomTab $w={40}>Terr...</BottomTab>
            <BottomTab $w={40}>Inp...</BottomTab>
            <BottomTab $w={38}>Tra...</BottomTab>
          </BottomTabs>
        </DockPanel>
      </Main>

      <StatusBar>
        <StatusCell $w={60} $on>Snap (F3)</StatusCell>
        <StatusCell $w={69}>Ortho (F8)</StatusCell>
        <StatusCell $w={76}>Polar (F9)</StatusCell>
        <StatusCell $w={165}>(-850.824m, 852.868m)</StatusCell>
        <StatusCell $w={260}>Auto-load complete</StatusCell>
        <StatusEnd><StatusLight /></StatusEnd>
      </StatusBar>

      <Frame $x={648} $y={44} $w={75} $h={112} />
      <Frame $x={1355} $y={183} $w={216} $h={145} />
      <Frame $x={1371} $y={786} $w={70} $h={46} />
    </Page>
  );
}
